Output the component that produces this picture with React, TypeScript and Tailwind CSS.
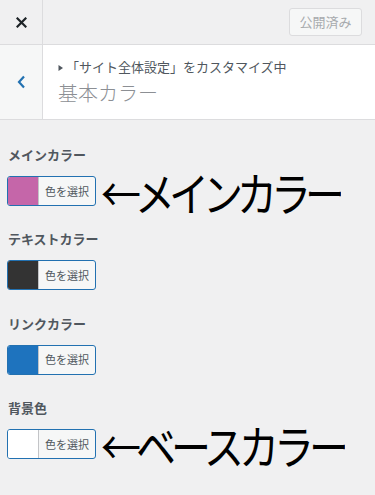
import React from 'react'

const font = { fontFamily: '"Noto Sans CJK JP", "Noto Sans", sans-serif' }

type Item = { label: string; color: string; note?: string; noteClass?: string }

const items: Item[] = [
  { label: 'メインカラー', color: 'bg-[#c566a9]', note: '←メインカラー', noteClass: 'tracking-[-6px]' },
  { label: 'テキストカラー', color: 'bg-[#333333]' },
  { label: 'リンクカラー', color: 'bg-[#1e73be]' },
  { label: '背景色', color: 'bg-white', note: '←ベースカラー', noteClass: 'tracking-[-5px]' },
]

function ColorButton({ color }: { color: string }) {
  return (
    <div className="flex h-[30px] w-[89px] shrink-0 overflow-hidden rounded-[3px] border border-[#2271b1] bg-[#f6f7f7]">
      <div className={`w-[30px] ${color}`} />
      <div className="flex flex-1 items-center justify-center border-l border-[#c3c4c7] text-[11px] text-[#50575e]">
        色を選択
      </div>
    </div>
  )
}

export default function App() {
  return (
    <div className="h-[495px] w-[375px] overflow-hidden bg-[#f0f0f1]" style={font}>
      {/* top bar */}
      <div className="flex h-[45px] border-b border-[#dcdcde]">
        <div className="flex w-[43px] items-center justify-center border-r border-[#dcdcde]">
          <svg width="11" height="11" viewBox="0 0 11 11" className="mt-[1px]">
            <path d="M1.5 1.5l8 8M9.5 1.5l-8 8" stroke="#1d2327" strokeWidth="2.2" strokeLinecap="square" />
          </svg>
        </div>
        <div className="flex flex-1 items-center justify-end pr-[13px]">
          <div className="flex h-[28px] w-[73px] items-center justify-center rounded-[3px] border border-[#dcdcde] bg-[#f6f7f7] text-[13px] text-[#a7aaad]">
            公開済み
          </div>
        </div>
      </div>

      {/* section header */}
      <div className="flex h-[75px] border-b border-[#dcdcde] bg-white">
        <div className="flex w-[43px] items-center justify-center border-r border-[#dcdcde] bg-[#f6f7f7]">
          <svg width="9" height="14" viewBox="0 0 9 14">
            <path d="M7 1.5L2 7l5 5.5" fill="none" stroke="#2271b1" strokeWidth="2.2" />
          </svg>
        </div>
        <div className="flex flex-1 flex-col pl-[15px] pt-[12px]">
          <div className="flex items-center text-[13px] leading-[20px] text-[#50575e]">
            <svg width="6" height="8" viewBox="0 0 6 8" className="mr-[2px] mt-[1px]">
              <path d="M0.5 1v6L5 4z" fill="#50575e" />
            </svg>
            「サイト全体設定」をカスタマイズ中
          </div>
          <div className="mt-[2px] text-[20px] font-light leading-[28px] text-[#8c8f94]">基本カラー</div>
        </div>
      </div>

      {/* controls */}
      <div className="flex flex-col gap-[23.3px] px-[7px] pt-[25px]">
        {items.map((it) => (
          <div key={it.label}>
            <div className="mb-[11px] pl-[1px] text-[13px] font-bold leading-[20px] text-[#50575e]">{it.label}</div>
            <div className="flex h-[30px] items-center">
              <ColorButton color={it.color} />
              {it.note && (
                <span
                  className={`ml-[5px] inline-block origin-center scale-y-[1.15] whitespace-nowrap text-[40px] leading-none text-black ${it.noteClass}`}
                >
                  {it.note}
                </span>
              )}
            </div>
          </div>
        ))}
      </div>
    </div>
  )
}
